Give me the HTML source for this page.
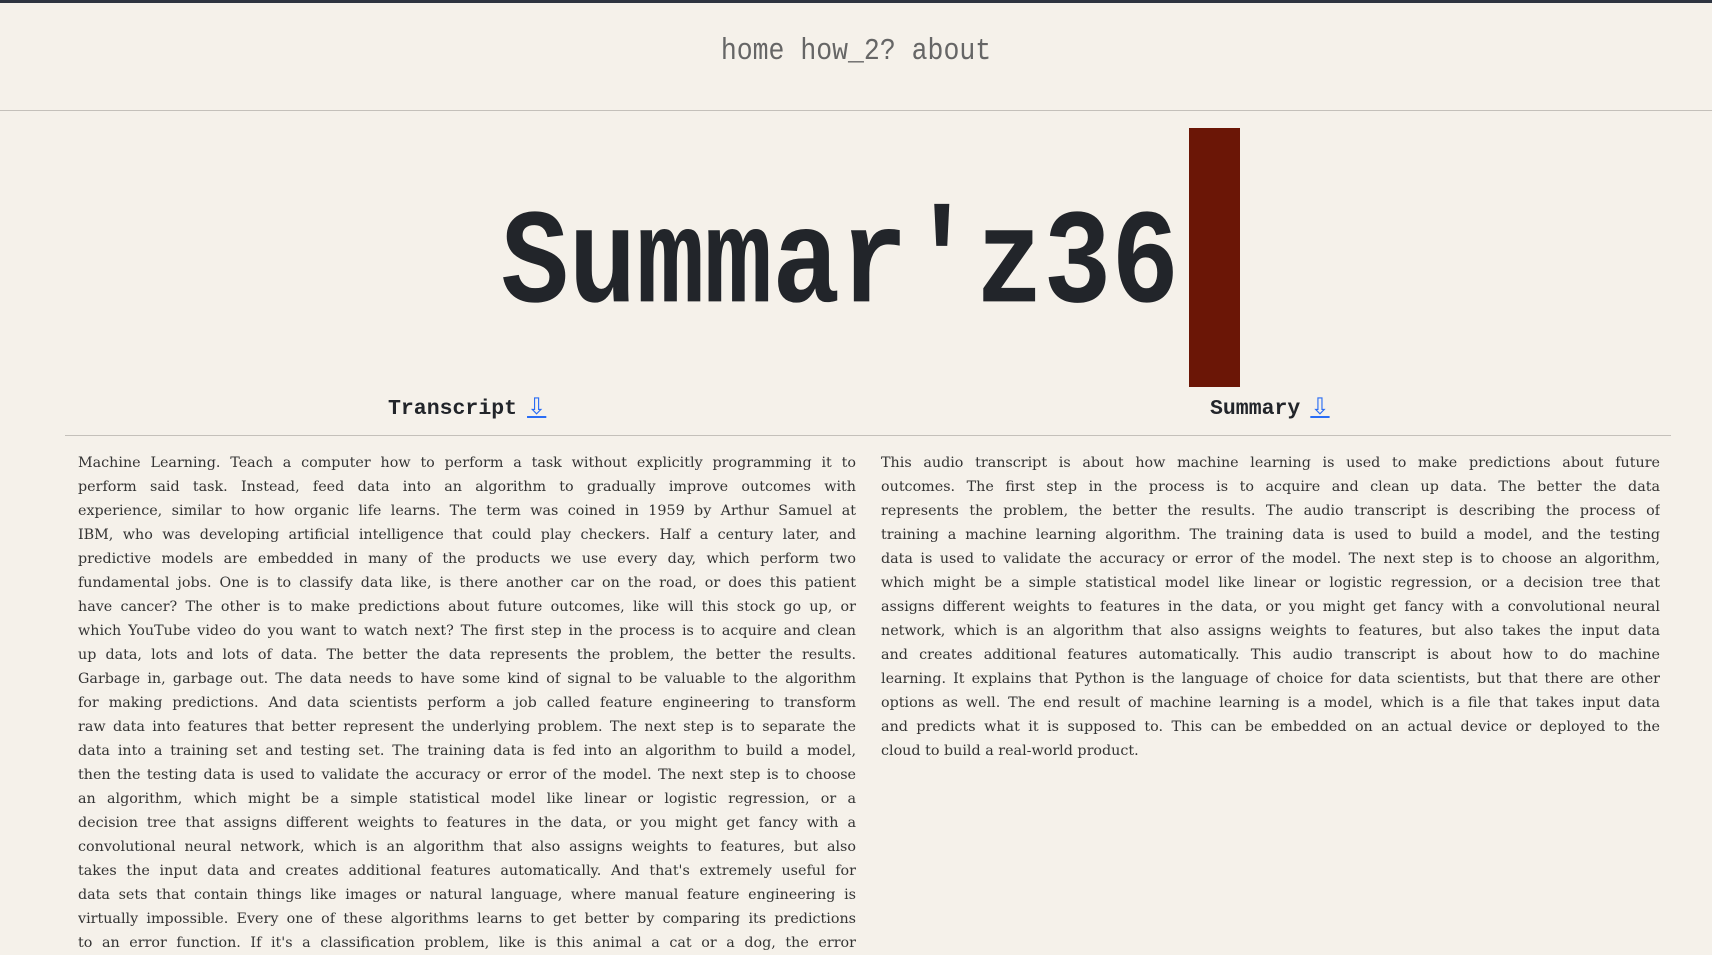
<!DOCTYPE html>
<html><head><meta charset="utf-8"><style>
html,body{margin:0;padding:0;background:#f5f1ea;width:1712px;height:953px;overflow:hidden}
.top{height:3px;background:#2e3440}
.nav{position:absolute;top:36px;left:0;width:1712px;text-align:center;font:26.5px "Liberation Mono",monospace;color:#666;transform:scaleY(1.15)}
.hr1{position:absolute;top:110px;left:0;width:1712px;height:1px;background:#c4c0ba}
.title{position:absolute;left:501px;top:199px;font:bold 113px "Liberation Mono",monospace;color:#22252a;transform:scaleY(1.19);transform-origin:0 0;line-height:1;white-space:nowrap}
.cursor{position:absolute;left:1189px;top:128px;width:51px;height:259px;background:#6b1606}
.h{position:absolute;top:394px;font:bold 21.5px "Liberation Mono",monospace;color:#22252a;white-space:nowrap}
.arr{color:#2a6df4;font-weight:normal;font-family:"DejaVu Sans",sans-serif;text-decoration:underline;margin-left:10px;font-size:23px}
.hr2{position:absolute;top:435px;left:65px;width:1606px;height:1px;background:#c4c0ba}
.col{position:absolute;top:451px;font:14.3px "DejaVu Serif",serif;color:#333;line-height:24px}
.col div{text-align:justify;text-align-last:justify;white-space:nowrap;overflow:hidden}
.col div.l{text-align-last:left}
</style></head><body>
<div class="top"></div>
<div class="nav">home how_2? about</div>
<div class="hr1"></div>
<div class="title">Summar'z36</div>
<div class="cursor"></div>
<div class="h" style="left:388px">Transcript<span class="arr">⇩</span></div>
<div class="h" style="left:1210px">Summary<span class="arr">⇩</span></div>
<div class="hr2"></div>
<div class="col" style="left:78px;width:778px">
<div>Machine Learning. Teach a computer how to perform a task without explicitly programming it to</div>
<div>perform said task. Instead, feed data into an algorithm to gradually improve outcomes with</div>
<div>experience, similar to how organic life learns. The term was coined in 1959 by Arthur Samuel at</div>
<div>IBM, who was developing artificial intelligence that could play checkers. Half a century later, and</div>
<div>predictive models are embedded in many of the products we use every day, which perform two</div>
<div>fundamental jobs. One is to classify data like, is there another car on the road, or does this patient</div>
<div>have cancer? The other is to make predictions about future outcomes, like will this stock go up, or</div>
<div>which YouTube video do you want to watch next? The first step in the process is to acquire and clean</div>
<div>up data, lots and lots of data. The better the data represents the problem, the better the results.</div>
<div>Garbage in, garbage out. The data needs to have some kind of signal to be valuable to the algorithm</div>
<div>for making predictions. And data scientists perform a job called feature engineering to transform</div>
<div>raw data into features that better represent the underlying problem. The next step is to separate the</div>
<div>data into a training set and testing set. The training data is fed into an algorithm to build a model,</div>
<div>then the testing data is used to validate the accuracy or error of the model. The next step is to choose</div>
<div>an algorithm, which might be a simple statistical model like linear or logistic regression, or a</div>
<div>decision tree that assigns different weights to features in the data, or you might get fancy with a</div>
<div>convolutional neural network, which is an algorithm that also assigns weights to features, but also</div>
<div>takes the input data and creates additional features automatically. And that's extremely useful for</div>
<div>data sets that contain things like images or natural language, where manual feature engineering is</div>
<div>virtually impossible. Every one of these algorithms learns to get better by comparing its predictions</div>
<div>to an error function. If it's a classification problem, like is this animal a cat or a dog, the error</div>
</div>
<div class="col" style="left:881px;width:779px">
<div>This audio transcript is about how machine learning is used to make predictions about future</div>
<div>outcomes. The first step in the process is to acquire and clean up data. The better the data</div>
<div>represents the problem, the better the results. The audio transcript is describing the process of</div>
<div>training a machine learning algorithm. The training data is used to build a model, and the testing</div>
<div>data is used to validate the accuracy or error of the model. The next step is to choose an algorithm,</div>
<div>which might be a simple statistical model like linear or logistic regression, or a decision tree that</div>
<div>assigns different weights to features in the data, or you might get fancy with a convolutional neural</div>
<div>network, which is an algorithm that also assigns weights to features, but also takes the input data</div>
<div>and creates additional features automatically. This audio transcript is about how to do machine</div>
<div>learning. It explains that Python is the language of choice for data scientists, but that there are other</div>
<div>options as well. The end result of machine learning is a model, which is a file that takes input data</div>
<div>and predicts what it is supposed to. This can be embedded on an actual device or deployed to the</div>
<div class="l">cloud to build a real-world product.</div>
</div>
</body></html>
